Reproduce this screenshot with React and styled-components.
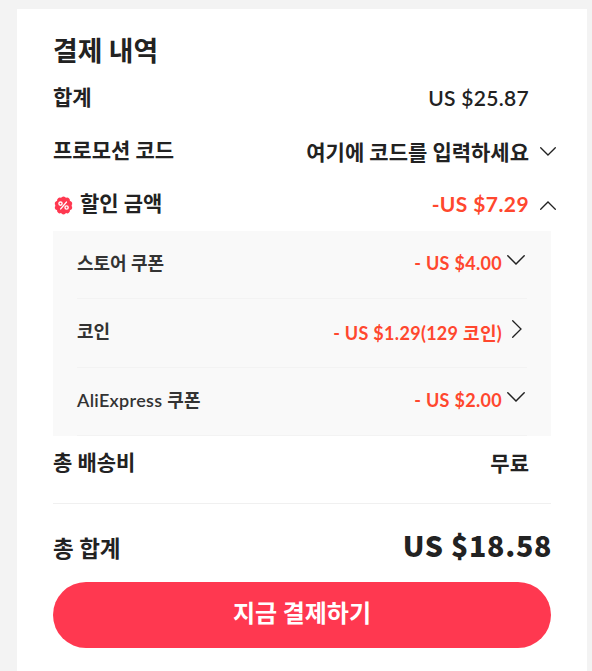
import React from 'react'
import styled, { createGlobalStyle } from 'styled-components'

const GlobalStyle = createGlobalStyle`
  * {
    box-sizing: border-box;
  }
  body {
    margin: 0;
    background: #f3f3f3;
    color: #222;
    font-family: Lato, "Noto Sans CJK KR", sans-serif;
  }
`

const Page = styled.div`
  height: 671px;
  padding: 9px 5px 0 17px;
  overflow: hidden;
`

const Card = styled.main`
  height: 662px;
  padding: 22px 36px 0;
  background: #fff;
`

const Title = styled.h1`
  margin: 0;
  height: 40px;
  font-size: 26.8px;
  line-height: 40px;
  font-weight: 700;
  white-space: nowrap;
`

const Row = styled.div`
  display: flex;
  height: ${(props) => props.$height}px;
  padding-top: 11px;
  margin-right: -5px;
  font-size: 21px;
  line-height: 30px;
  font-weight: 700;
  white-space: nowrap;
`

const Label = styled.span`
  display: flex;
  flex: 1;
`

const Amount = styled.span`
  margin-top: ${(props) => props.$drop ?? 2}px;
  color: ${(props) => (props.$red ? '#ff472e' : '#222')};
  font-size: ${(props) => props.$size || 21}px;
  font-weight: ${(props) => props.$weight || 700};
  letter-spacing: ${(props) => props.$spacing || 0}px;
`

const Toggle = styled.span`
  width: 27px;
  padding: ${(props) => props.$top || 12}px 0 0 11px;
  line-height: 0;
`

const BadgeBox = styled.span`
  width: 27px;
  padding: 8px 0 0 1px;
  line-height: 0;
`

const Details = styled.section`
  height: 205px;
  padding: 0 24px;
  background: #f9f9f9;
`

const DetailRow = styled.div`
  display: flex;
  height: ${(props) => props.$height}px;
  padding-top: 19px;
  border-bottom: 1px solid #f3f3f3;
  color: #333;
  font-size: 18px;
  line-height: 26px;
  font-weight: 700;
  white-space: nowrap;
`

const LatinLabel = styled.span`
  margin-right: 5px;
  font-weight: 600;
  letter-spacing: 0.3px;
`

const DetailToggle = styled.span`
  width: 25px;
  padding: ${(props) => props.$pad};
  line-height: 0;
`

const Total = styled.div`
  display: flex;
  justify-content: space-between;
  height: 79px;
  padding-top: 28px;
  border-top: 1px solid #f0f0f0;
  font-size: 22.5px;
  line-height: 34px;
  font-weight: 700;
  white-space: nowrap;
`

const TotalAmount = styled.span`
  margin: -4px -1px 0 0;
  font-family: "Noto Sans CJK KR", sans-serif;
  font-size: 28.5px;
  font-weight: 900;
  letter-spacing: 0.7px;
`

const PayButton = styled.button`
  display: block;
  width: 100%;
  height: 66px;
  padding: 0 0 7px;
  border: 0;
  border-radius: 33px;
  background: #ff3850;
  color: #fff;
  font: 700 24px "Noto Sans CJK KR", sans-serif;
`

const Chevron = ({ direction, width = 16 }) => {
  const points = {
    down: '0.7,0.7 8,8 15.3,0.7',
    up: '0.7,8.3 8,1 15.3,8.3',
    right: '0.7,0.7 9,9 0.7,17.3',
  }
  const box = direction === 'right' ? '0 0 10 18' : '0 0 16 9'
  const height = direction === 'right' ? 18 : (width * 9) / 16
  return (
    <svg width={width} height={height} viewBox={box} fill="none">
      <polyline points={points[direction]} stroke="#222" strokeWidth="1.3" strokeLinecap="round" />
    </svg>
  )
}

const DiscountBadge = () => (
  <svg width="19" height="19" viewBox="0 0 19 19">
    <circle cx="9.5" cy="9.5" r="8.2" fill="#ff3850" />
    {[0, 36, 72, 108, 144, 180, 216, 252, 288, 324].map((angle) => (
      <circle key={angle} cx="9.5" cy="2.5" r="2.1" fill="#ff3850" transform={`rotate(${angle} 9.5 9.5)`} />
    ))}
    <g fill="none" stroke="#fff" strokeWidth="1.4" strokeLinecap="round">
      <path d="M12.4 6.1 6.7 12.9" />
      <circle cx="6.5" cy="7.6" r="1.6" />
      <circle cx="12.6" cy="11.5" r="1.6" />
    </g>
  </svg>
)

const App = () => {
  return (
    <>
      <GlobalStyle />
      <Page>
        <Card>
          <Title>결제 내역</Title>
          <Row $height={53}>
            <Label>합계</Label>
            <Amount $drop={1} $weight={600} $spacing={0.3}>US $25.87</Amount>
            <Toggle />
          </Row>
          <Row $height={53}>
            <Label>프로모션 코드</Label>
            <Amount>여기에 코드를 입력하세요</Amount>
            <Toggle><Chevron direction="down" /></Toggle>
          </Row>
          <Row $height={54}>
            <Label>
              <BadgeBox><DiscountBadge /></BadgeBox>
              할인 금액
            </Label>
            <Amount $red $drop={1} $spacing={0.4}>-US $7.29</Amount>
            <Toggle $top={13}><Chevron direction="up" /></Toggle>
          </Row>
          <Details>
            <DetailRow $height={68}>
              <Label>스토어 쿠폰</Label>
              <Amount $red $size={18} $drop={0} $spacing={0.3}>- US $4.00</Amount>
              <DetailToggle $pad="5px 0 0 5px"><Chevron direction="down" width={18} /></DetailToggle>
            </DetailRow>
            <DetailRow $height={69}>
              <Label>코인</Label>
              <Amount $red $size={18} $spacing={0.3}>- US $1.29(129 코인)</Amount>
              <DetailToggle $pad="2px 0 0 10px"><Chevron direction="right" width={10} /></DetailToggle>
            </DetailRow>
            <DetailRow $height={68}>
              <Label><LatinLabel>AliExpress</LatinLabel>쿠폰</Label>
              <Amount $red $size={18} $drop={0} $spacing={0.3}>- US $2.00</Amount>
              <DetailToggle $pad="5px 0 0 5px"><Chevron direction="down" width={18} /></DetailToggle>
            </DetailRow>
          </Details>
          <Row $height={67}>
            <Label>총 배송비</Label>
            <Amount $drop={1}>무료</Amount>
            <Toggle />
          </Row>
          <Total>
            <span>총 합계</span>
            <TotalAmount>US $18.58</TotalAmount>
          </Total>
          <PayButton>지금 결제하기</PayButton>
        </Card>
      </Page>
    </>
  )
}

export default App
